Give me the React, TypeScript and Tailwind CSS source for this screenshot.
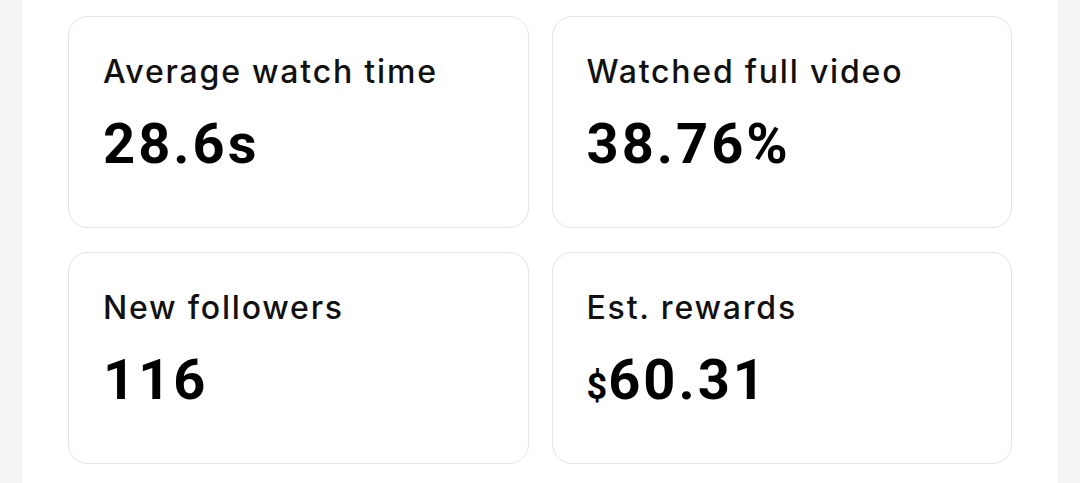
import React from "react";

const cards = [
  { label: "Average watch time", value: "28.6s" },
  { label: "Watched full video", value: "38.76%" },
  { label: "New followers", value: "116" },
  { label: "Est. rewards", value: "60.31", prefix: "$" },
];

export default function App() {
  return (
    <div className="w-[1080px] h-[483px] bg-[#f5f5f5] flex justify-center overflow-hidden" style={{ fontFamily: "Roboto, 'Liberation Sans', sans-serif" }}>
      <div className="w-[1036px] h-full bg-white px-[46px] pt-[16px]">
        <div className="grid grid-cols-2 gap-x-[23px] gap-y-[24px]">
          {cards.map((c) => (
            <div key={c.label} className="h-[212px] rounded-[20px] border border-[#e3e3e3] pl-[34px] pt-[35px]">
              <div className="font-['Inter',_'Roboto',_sans-serif] text-[32px] leading-[40px] font-medium tracking-[1.8px] text-[#111111]">{c.label}</div>
              <div className="mt-[20px] text-[56px] leading-[64px] font-bold tracking-[3px] text-black flex items-baseline">
                {c.prefix && <span className="text-[36px] tracking-[0px] mr-[1px]">{c.prefix}</span>}
                <span>{c.value}</span>
              </div>
            </div>
          ))}
        </div>
      </div>
    </div>
  );
}
